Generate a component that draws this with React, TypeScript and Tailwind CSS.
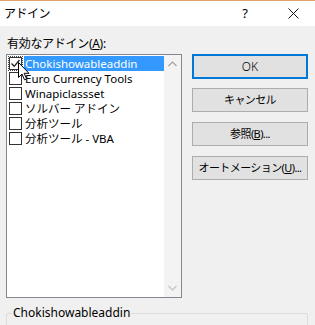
import { ReactNode } from 'react'

const font = {
  fontFamily: '"Noto Sans", "Noto Sans CJK JP", sans-serif',
}

function CheckBox({ checked }: { checked?: boolean }) {
  return (
    <span className="flex h-[13px] w-[13px] shrink-0 items-center justify-center border border-[#333333] bg-white">
      {checked && (
        <svg width="11" height="11" viewBox="0 0 11 11">
          <path d="M1.5 5.5 L4.2 8.3 L9.5 2" fill="none" stroke="#222" strokeWidth="1.3" />
        </svg>
      )}
    </span>
  )
}

function DlgButton({ children, primary }: { children: ReactNode; primary?: boolean }) {
  return (
    <div
      className={
        primary
          ? 'flex h-[25px] items-center justify-center whitespace-nowrap border-2 border-[#0078d7] bg-[#e1e1e1] text-[12px] font-light text-black'
          : 'flex h-[24px] items-center justify-center whitespace-nowrap border border-[#adadad] bg-[#e1e1e1] text-[11px] tracking-[-0.6px] text-black'
      }
    >
      {children}
    </div>
  )
}

export default function App() {
  const addins = [
    'Chokishowableaddin',
    'Euro Currency Tools',
    'Winapiclassset',
    'ソルバー アドイン',
    '分析ツール',
    '分析ツール - VBA',
  ]

  return (
    <div className="relative h-[325px] w-[315px] overflow-hidden bg-[#f0f0f0] text-black" style={font}>
      {/* Title bar */}
      <div className="flex h-[26px] items-center border-t border-[#e0a36c] bg-white text-[12px]">
        <span className="pl-[4px] tracking-[-0.5px]">アドイン</span>
        <span className="ml-auto w-[12px] text-center text-[13px]">?</span>
        <span className="ml-[36px] mr-[16px] flex w-[12px] justify-center">
          <svg width="11" height="11" viewBox="0 0 11 11">
            <path d="M0.5 0.5 L10.5 10.5 M10.5 0.5 L0.5 10.5" stroke="#111" strokeWidth="1" />
          </svg>
        </span>
      </div>

      <div className="px-[6px]">
        {/* Label */}
        <div className="flex h-[28px] items-end pb-[1px] pl-[1px] text-[12px] tracking-[-0.3px]">
          有効なアドイン(<span className="underline">A</span>):
        </div>

        <div className="flex">
          {/* Listbox */}
          <div className="flex h-[244px] w-[176px] border border-[#828790] bg-white">
            <div className="flex-1 pt-[1px]">
              {addins.map((name, i) => (
                <div key={name} className="flex h-[15px] items-center pl-[2px] text-[11.5px] leading-[15px]">
                  <span className={i === 0 ? 'outline outline-1 outline-dotted outline-[#444]' : ''}>
                    <CheckBox checked={i === 0} />
                  </span>
                  <span
                    className={
                      i === 0
                        ? 'ml-[2px] flex h-[15px] w-[140px] items-center bg-[#3399ff] pl-[1px] text-white'
                        : 'ml-[2px] pl-[1px]'
                    }
                  >
                    {name}
                  </span>
                </div>
              ))}
            </div>
            <div className="flex w-[17px] flex-col items-center justify-between bg-[#f3f3f3] py-[6px]">
              <svg width="9" height="6" viewBox="0 0 9 6">
                <path d="M0.5 5 L4.5 1 L8.5 5" fill="none" stroke="#a3a3a3" strokeWidth="1.2" />
              </svg>
              <svg width="9" height="6" viewBox="0 0 9 6">
                <path d="M0.5 1 L4.5 5 L8.5 1" fill="none" stroke="#c3c3c3" strokeWidth="1.2" />
              </svg>
            </div>
          </div>

          {/* Buttons */}
          <div className="ml-[10px] flex w-[116px] flex-col">
            <DlgButton primary>OK</DlgButton>
            <div className="mt-[9px]">
              <DlgButton>キャンセル</DlgButton>
            </div>
            <div className="mt-[10px]">
              <DlgButton>
                参照(<span className="underline">B</span>)...
              </DlgButton>
            </div>
            <div className="mt-[10px]">
              <DlgButton>
                オートメーション(<span className="underline">U</span>)...
              </DlgButton>
            </div>
          </div>
        </div>

        {/* Description group box */}
        <div className="relative mt-[15px] h-[30px] w-[302px] rounded-[2px] border border-[#dcdcdc]">
          <span className="absolute -top-[9px] left-[5px] bg-[#f0f0f0] px-[1px] text-[12px] leading-[16px]">
            Chokishowableaddin
          </span>
        </div>
      </div>

      {/* Mouse pointer */}
      <svg className="absolute left-[18px] top-[62px]" width="12" height="19" viewBox="0 0 12 19">
        <path
          d="M0.5 0.5 L0.5 15.5 L4 12 L6.5 17.8 L8.6 16.9 L6.2 11.3 L11 11.3 Z"
          fill="#fff"
          stroke="#000"
          strokeWidth="1"
        />
      </svg>
    </div>
  )
}
